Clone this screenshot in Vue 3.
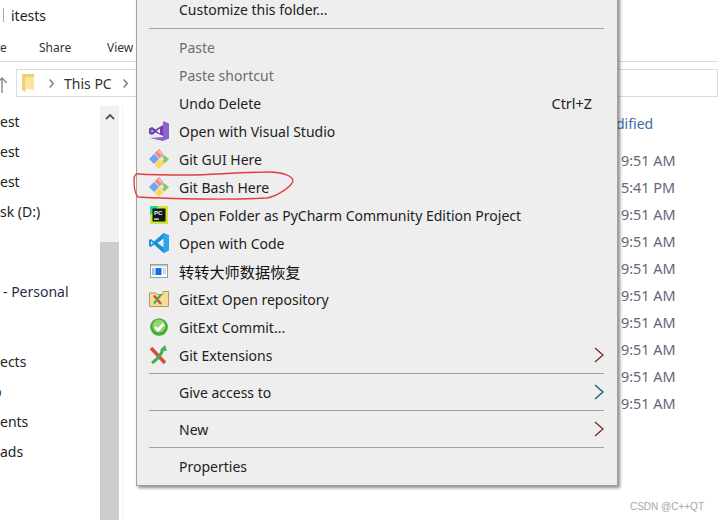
<script setup>
const topItems = [
  { label: 'Paste', disabled: true },
  { label: 'Paste shortcut', disabled: true },
  { label: 'Undo Delete', shortcut: 'Ctrl+Z' },
  { label: 'Open with Visual Studio', icon: 'vs' },
  { label: 'Git GUI Here', icon: 'git' },
  { label: 'Git Bash Here', icon: 'git' },
  { label: 'Open Folder as PyCharm Community Edition Project', icon: 'pc' },
  { label: 'Open with Code', icon: 'code' },
  { label: '转转大师数据恢复', icon: 'zz', cjk: true },
  { label: 'GitExt Open repository', icon: 'folder' },
  { label: 'GitExt Commit...', icon: 'commit' },
  { label: 'Git Extensions', icon: 'ext', arrow: 'red' }
]
const sideRows = [
  { t: 'est' }, { t: 'est' }, { t: 'est' }, { t: 'sk (D:)' },
  { t: '- Personal', cls: 'indent' },
  { t: 'ects', cls: 'group' }, { t: 'p', cls: 'clip' }, { t: 'ents' }, { t: 'ads' }
]
const times = ['9:51 AM', '5:41 PM', '9:51 AM', '9:51 AM', '9:51 AM', '9:51 AM', '9:51 AM', '9:51 AM', '9:51 AM', '9:51 AM']
</script>

<template>
  <div class="page">
    <div class="title">
      <span class="tick"></span>
      <span>itests</span>
    </div>
    <div class="ribbon">
      <span class="tab-e">e</span>
      <span>Share</span>
      <span>View</span>
    </div>
    <div class="address-row">
      <svg class="up" width="10" height="16" viewBox="0 0 10 16"><path d="M0 6 L5 1 L10 6 M5 1 V16" fill="none" stroke="#8a8a8a" stroke-width="1.4"/></svg>
      <div class="address">
        <svg width="12" height="18" viewBox="0 0 12 18" class="crumb-folder">
          <path d="M0 0 H12 V16 L4 14 L3 18 L0 16 Z" fill="#f3cf6b"/>
          <path d="M3 3 H12 V16 L3 14 Z" fill="#fbe3a0"/>
        </svg>
        <svg class="sep" width="5" height="9" viewBox="0 0 5 9"><path d="M0.700 0.500 L4.200 4.500 L0.700 8.500" fill="none" stroke="#808080" stroke-width="1.500"/></svg>
        <span class="pc">This PC</span>
        <svg class="sep" width="5" height="9" viewBox="0 0 5 9"><path d="M0.700 0.500 L4.200 4.500 L0.700 8.500" fill="none" stroke="#808080" stroke-width="1.500"/></svg>
      </div>
    </div>
    <div class="body">
      <div class="side">
        <div v-for="(r, i) in sideRows" :key="i" class="side-row" :class="r.cls">{{ r.t }}</div>
      </div>
      <div class="scroll">
        <svg class="scroll-up" width="10" height="7" viewBox="0 0 10 7"><path d="M1 6 L5 2 L9 6" fill="none" stroke="#555" stroke-width="1.800"/></svg>
        <div class="thumb"></div>
      </div>
      <div class="list">
        <div class="modified">dified</div>
        <div class="times">
          <div v-for="(t, i) in times" :key="i" class="time">{{ t }}</div>
        </div>
      </div>
    </div>

    <div class="menu">
      <div class="mi first"><span class="ic"></span>Customize this folder...</div>
      <div class="rule"></div>
      <div v-for="it in topItems" :key="it.label" class="mi" :class="{ off: it.disabled }">
        <span class="ic">
          <svg v-if="it.icon === 'vs'" width="20" height="20" viewBox="0 0 20 20">
            <path d="M14 0 L20 2.500 V17.500 L14 20 L1 17 L14 16 Z" fill="#8a63cf"/>
            <path fill-rule="evenodd" d="M14 4 L6.500 8.500 L3 6 L0 7.500 V12.500 L3 14 L6.500 11.500 L14 15 Z M11 7.500 V12.500 L7.500 10 Z M2.500 8.500 L4.500 10 L2.500 11.500 Z" fill="#6e3fb5"/>
          </svg>
          <svg v-else-if="it.icon === 'git'" width="20" height="20" viewBox="0 0 20 20">
            <path d="M0 10 L5 5 L10 10 L5 15 Z" fill="#6aa5ee"/>
            <path d="M5.500 15.500 L10.500 10.500 L15 15 L10 20 Z" fill="#f8d95e"/>
            <path d="M11 10 L15 6 L20 10 L15.500 14.500 Z" fill="#8dc85f"/>
            <path d="M11 10 L13 8 L15 10 L13 12 Z" fill="#ececec"/>
            <path d="M5.500 4.500 L10 0 L14.500 5.500 L10.500 9.500 Z" fill="#ef8a86"/>
            <path d="M9 2.500 L10 1.500 L13 5 L12 6 Z" fill="#f8c9c6"/>
          </svg>
          <svg v-else-if="it.icon === 'pc'" width="18" height="18" viewBox="0 0 18 18">
            <rect width="18" height="18" fill="#d5e236"/>
            <path d="M0 0 H9 L0 9 Z" fill="#21d789"/>
            <rect x="2.500" y="2.500" width="13" height="13" fill="#0b1a17"/>
            <text x="4" y="9" class="pc-txt">PC</text>
            <rect x="4" y="12.500" width="5" height="1.200" fill="#fff"/>
          </svg>
          <svg v-else-if="it.icon === 'code'" width="20" height="20" viewBox="0 0 20 20">
            <path d="M14.500 0 L20 2.500 V17.500 L14.500 20 L5 11.500 L2 14 L0 13 V7 L2 6 L5 8.500 Z" fill="#1c8fdc"/>
            <path d="M14.500 0 L20 2.500 V17.500 L14.500 20 Z" fill="#2ba5ec"/>
            <path d="M14.500 5.500 V14.500 L8.500 10 Z M2 8 L4 10 L2 12 Z" fill="#ececec"/>
          </svg>
          <svg v-else-if="it.icon === 'zz'" width="18" height="14" viewBox="0 0 18 14">
            <rect x="0.500" y="0.500" width="17" height="13" fill="#fff" stroke="#9a9a9a"/>
            <rect x="1" y="1" width="16" height="1.500" fill="#c9c9c9"/>
            <rect x="5.500" y="4" width="6" height="7" fill="#1070e0"/>
            <path d="M2 4 H4.500 V11 H2 Z" fill="#8fc1f2"/>
            <path d="M13 5 H16 M13 7 H16 M13 9 H16" stroke="#aaa"/>
          </svg>
          <svg v-else-if="it.icon === 'folder'" width="20" height="16" viewBox="0 0 20 16">
            <path d="M0.500 2 L7 2 L8.500 3.500 L14 3.500 L14 0.500 H19.500 V15.500 H0.500 Z" fill="#f6dc9b" stroke="#bd9a58"/>
            <path d="M5 4.500 L12 13" stroke-width="2.400" fill="none" stroke="#d94a3e"/>
            <path d="M5 12.500 L12 3.500" stroke-width="2.200" fill="none" stroke="#4daa4d"/>
          </svg>
          <svg v-else-if="it.icon === 'commit'" width="18" height="18" viewBox="0 0 18 18">
            <circle cx="9" cy="9" r="8.800" fill="#49a83c"/>
            <circle cx="9" cy="8" r="6.500" fill="#93d96b"/>
            <path d="M5 9 L8 12 L13.500 6" fill="none" stroke="#fff" stroke-width="2.600"/>
          </svg>
          <svg v-else-if="it.icon === 'ext'" width="18" height="20" viewBox="0 0 18 20">
            <path d="M1 3 L15 18" stroke="#d94a3e" stroke-width="3.400" fill="none"/>
            <path d="M2 18 C7 14 11 11 13 4" stroke="#45ad4c" stroke-width="3" fill="none"/>
            <path d="M10 5 L15 0 L17 6 Z" fill="#45ad4c"/>
          </svg>
        </span>
        <span class="lbl" :class="{ cjk: it.cjk }">{{ it.label }}</span>
        <span v-if="it.shortcut" class="short">{{ it.shortcut }}</span>
        <svg v-if="it.arrow" class="arrow" width="10" height="16" viewBox="0 0 10 16"><path d="M1 1 L9 8 L1 15" fill="none" stroke="#7a2a20" stroke-width="1.300"/></svg>
      </div>
      <div class="rule tight"></div>
      <div class="mi"><span class="ic"></span><span class="lbl">Give access to</span>
        <svg class="arrow" width="10" height="16" viewBox="0 0 10 16"><path d="M1 1 L9 8 L1 15" fill="none" stroke="#135a6b" stroke-width="1.300"/></svg>
      </div>
      <div class="rule tight"></div>
      <div class="mi"><span class="ic"></span><span class="lbl">New</span>
        <svg class="arrow" width="10" height="16" viewBox="0 0 10 16"><path d="M1 1 L9 8 L1 15" fill="none" stroke="#7a2a20" stroke-width="1.300"/></svg>
      </div>
      <div class="rule tight"></div>
      <div class="mi"><span class="ic"></span><span class="lbl">Properties</span></div>
    </div>

    <svg class="ring" width="170" height="36" viewBox="130 168 170 36">
      <path d="M140 174 C136 173 134 175 134 180 C134 187 135 194 138 197 C170 199 230 200 267 198 C278 196 292 186 293 181 C293 176 282 172 270 172 C240 172 210 175 190 175 C170 175 150 175 140 174 Z" fill="none" stroke="#e23c40" stroke-width="1.300"/>
    </svg>

    <div class="mark">CSDN @C++QT</div>
  </div>
</template>

<style>
html, body { margin: 0; padding: 0; background: #fff; }
</style>

<style scoped>
.page {
  position: relative;
  width: 718px;
  height: 520px;
  overflow: hidden;
  background: #fff;
  color: #222;
  font-family: "Noto Sans", "Noto Sans CJK SC", sans-serif;
  font-size: 14px;
}
.title { height: 30px; display: flex; align-items: center; gap: 7px; font-size: 14px; box-sizing: border-box; }
.tick { width: 1px; height: 14px; background: #aaa; margin-left: 3px; }
.ribbon {
  height: 32px;
  box-sizing: border-box;
  border-bottom: 1px solid #dcdcdc;
  display: flex;
  align-items: center;
  font-size: 12px;
  color: #333;
  padding-top: 4px;
}
.ribbon .tab-e { width: 39px; }
.ribbon span:nth-child(2) { width: 68px; }
.address-row { height: 44px; display: flex; align-items: flex-start; box-sizing: border-box; padding-top: 7px; }
.up { margin: 8px 9px 0 -3px; }
.address { flex: 1; height: 28px; border: 1px solid #dcdcdc; display: flex; align-items: center; padding-left: 5px; box-sizing: border-box; }
.crumb-folder { margin-right: 15px; }
.sep { flex: none; }
.pc { margin: 0 11px 0 10px; color: #333; }
.body { display: flex; height: 414px; }
.side { width: 100px; color: #222; padding-top: 1px; }
.side-row { height: 30px; line-height: 30px; white-space: nowrap; overflow: hidden; }
.side-row.indent { padding-left: 3px; color: #1f2f44; margin-top: 50px; }
.side-row.group { margin-top: 40px; }
.side-row.clip { margin-left: -7px; color: #222; }
.scroll { width: 19px; background: #f1f1f1; display: flex; flex-direction: column; }
.scroll-up { margin: 7px auto 0; }
.thumb { margin-top: 122px; flex: 1; background: #cdcdcd; }
.list { flex: 1; border-left: 1px solid #f4f4f4; margin-left: 3px; padding-left: 498px; }
.modified { margin-top: 4px; color: #3c6ea8; height: 27px; line-height: 27px; margin-left: -5px; }
.times { margin-top: 10px; }
.time { height: 27px; line-height: 27px; color: #667; font-size: 14.4px; }
.menu {
  position: absolute;
  left: 136px;
  top: -5px;
  width: 482px;
  height: 491px;
  box-sizing: border-box;
  background: #eeeeee;
  border: 1px solid #a0a0a0;
  border-top: none;
  box-shadow: 2px 2px 3px rgba(0, 0, 0, 0.45);
  padding: 0 12px;
  color: #222;
  display: flex;
  flex-direction: column;
}
.mi { height: 28px; flex: none; display: flex; align-items: center; white-space: nowrap; position: relative; }
.mi.off { color: #6d6d6d; }
.ic { width: 20px; margin-right: 10px; display: flex; align-items: center; justify-content: center; flex: none; }
.lbl { flex: 1; }
.lbl.cjk { font-size: 15.2px; color: #111; }
.short { margin-right: 13px; font-size: 14.4px; }
.arrow { margin-right: 1px; }
.rule { height: 1px; background: #a0a0a0; margin: 5px 1px 4px 0; flex: none; }
.rule.tight { margin: 4px 1px 4px 0; }
.pc-txt { font-family: "Liberation Sans", sans-serif; font-size: 6px; font-weight: 700; fill: #fff; }
.ring { position: absolute; left: 130px; top: 168px; }
.mark { position: absolute; right: 14px; bottom: 8px; font-size: 10px; color: #a8a8a8; font-family: "Liberation Sans", sans-serif; }
</style>
